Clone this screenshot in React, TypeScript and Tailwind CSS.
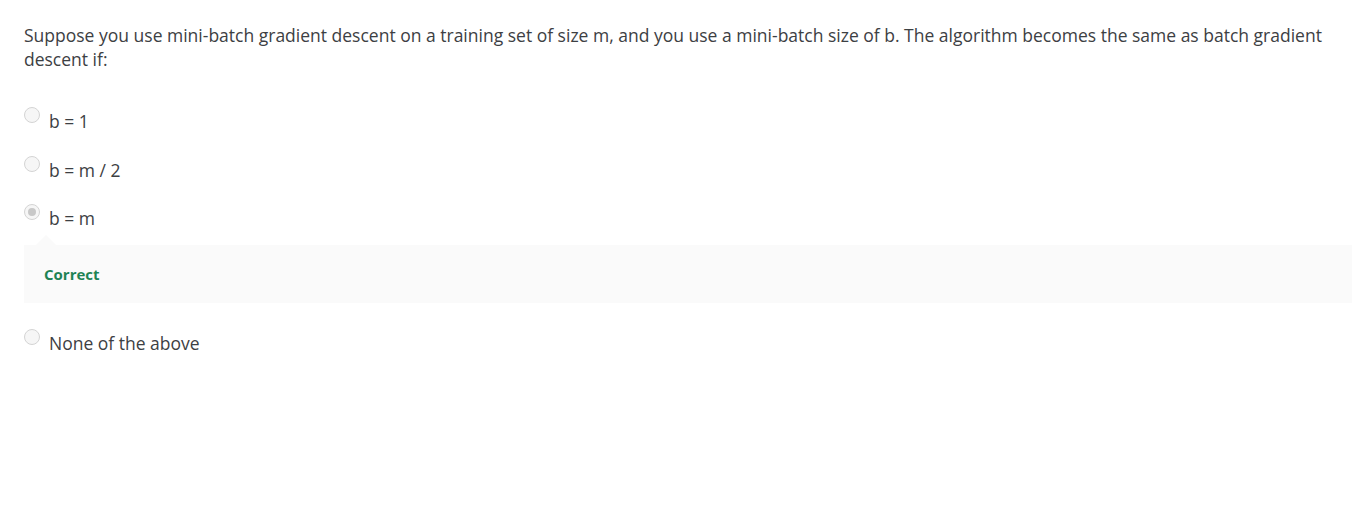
import { useState } from 'react'

const OPTIONS = ['b = 1', 'b = m / 2', 'b = m', 'None of the above'];

function Radio({ checked }: { checked: boolean }) {
  return (
    <span className="w-4 h-4 rounded-full border border-[#d4d4d4] bg-[#f6f6f6] flex items-center justify-center shrink-0 mt-[2px]">
      {checked && <span className="w-2 h-2 rounded-full bg-[#c8c8c8]" />}
    </span>
  );
}

function App() {
  const [selected] = useState(2);

  return (
    <div className="min-h-screen w-full bg-white pl-6 pt-[23px] text-[#3d4043]" style={{ fontFamily: '"Open Sans", sans-serif' }}>
      <p className="text-[17.5px] leading-6">
        Suppose you use mini-batch gradient descent on a training set of size m, and you use a mini-batch size of b. The algorithm becomes the same as batch gradient descent if:
      </p>
      <div className="mt-[34px] flex flex-col">
        {OPTIONS.map((opt, i) => (
          <div key={opt} className="flex flex-col">
            <label className="flex items-start gap-[9px] h-6">
              <Radio checked={i === selected} />
              <span className="text-[17.5px] leading-6 mt-[4px]">{opt}</span>
            </label>
            {i === selected ? (
              <div className="relative mt-[19px] mb-[24px] bg-[#fafafa] h-[58px] flex items-center pl-5">
                <span className="absolute -top-[10px] left-[12px] w-0 h-0 border-l-[10px] border-r-[10px] border-b-[10px] border-l-transparent border-r-transparent border-b-[#fafafa]" />
                <span className="text-[15px] font-bold text-[#1f8354]">Correct</span>
              </div>
            ) : (
              <div className="h-[24.5px]" />
            )}
          </div>
        ))}
      </div>
    </div>
  );
}

export default App
